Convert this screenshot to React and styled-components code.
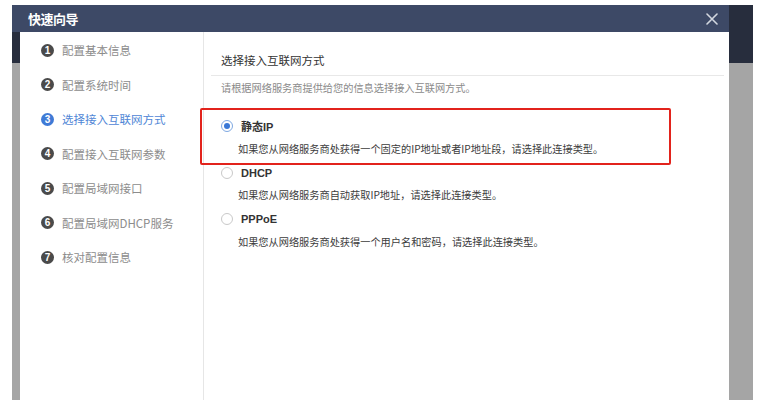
import React from 'react';
import styled, { createGlobalStyle } from 'styled-components';

const GlobalStyle = createGlobalStyle`
    html, body {
        margin: 0;
        padding: 0;
        background: #ffffff;
        overflow: hidden;
    }
    body {
        font-family: "Noto Sans CJK SC", "Noto Sans", sans-serif;
    }
`;

const Page = styled.div`
    width: 758px;
    height: 400px;
    padding: 5px 5px 0 12px;
    box-sizing: border-box;
`;

// the app behind the dialog, dimmed by the overlay
const Backdrop = styled.div`
    width: 741px;
    height: 395px;
    background: linear-gradient(#272d3d 0 58px, #a5a5a5 58px);
`;

const Dialog = styled.div`
    width: 717px;
    height: 100%;
    display: flex;
    flex-direction: column;
`;

const Header = styled.div`
    height: 27px;
    flex: none;
    padding: 0 10px 0 16px;
    display: flex;
    align-items: center;
    justify-content: space-between;
    background: #3d4966;
`;

const Title = styled.div`
    color: #ffffff;
    font-size: 13px;
    font-weight: 700;
    letter-spacing: -0.5px;
`;

const Close = styled.button`
    width: 14px;
    height: 14px;
    padding: 0;
    border: 0;
    background: none;
    display: flex;
    align-items: center;
    justify-content: center;
    cursor: pointer;
`;

const Body = styled.div`
    flex: 1;
    margin-left: 8px;
    background: #ffffff;
    display: flex;
`;

const Sidebar = styled.ul`
    width: 184px;
    margin: 0;
    padding: 1px 0 0 21px;
    box-sizing: border-box;
    list-style: none;
    border-right: 1px solid #e6e6e6;
`;

const Step = styled.li`
    height: 34.5px;
    display: flex;
    align-items: center;
    gap: 8px;
    font-size: 11.5px;
    color: ${({ $active }) => ($active ? '#4f86d6' : '#8c8c8c')};
`;

const StepNum = styled.span`
    width: 13px;
    height: 13px;
    border-radius: 50%;
    flex: none;
    display: flex;
    align-items: center;
    justify-content: center;
    background: ${({ $active }) => ($active ? '#3f7ad6' : '#4a4a4a')};
    color: #ffffff;
    font-family: "Liberation Sans", Arial, sans-serif;
    font-size: 10px;
    font-weight: 700;
`;

const Content = styled.div`
    flex: 1;
    position: relative;
    padding: 0 5px 0 7px;
`;

const Heading = styled.div`
    height: 44px;
    box-sizing: border-box;
    padding: 0 0 8px 10px;
    display: flex;
    align-items: flex-end;
    border-bottom: 1px solid #e8e8e8;
    font-size: 11.5px;
    line-height: 14px;
    color: #333333;
`;

const Hint = styled.div`
    margin-top: 5px;
    padding-left: 10px;
    font-size: 10.2px;
    line-height: 14px;
    color: #8a8a8a;
`;

const Options = styled.div`
    margin-top: 20px;
    padding-left: 10px;
`;

const Option = styled.div`
    margin-bottom: 2.5px;
`;

const OptionLabel = styled.label`
    height: 22px;
    display: flex;
    align-items: center;
    gap: 8px;
    font-family: "Liberation Sans", "Noto Sans CJK SC", sans-serif;
    font-size: 11px;
    font-weight: 700;
    color: #333333;
`;

const Radio = styled.span`
    width: 12px;
    height: 12px;
    box-sizing: border-box;
    border-radius: 50%;
    border: 1px solid ${({ $checked }) => ($checked ? '#7ea8e2' : '#c9c9c9')};
    display: flex;
    align-items: center;
    justify-content: center;

    &::after {
        content: '';
        width: 6px;
        height: 6px;
        border-radius: 50%;
        background: ${({ $checked }) => ($checked ? '#3a78d6' : 'transparent')};
    }
`;

const OptionDesc = styled.div`
    height: 22px;
    display: flex;
    align-items: center;
    padding-left: 17px;
    font-size: 10.2px;
    color: #3c3c3c;
`;

// red annotation drawn over the screenshot
const Highlight = styled.div`
    position: absolute;
    left: -4px;
    top: 76px;
    width: 471px;
    height: 57px;
    box-sizing: border-box;
    border: 2px solid #e2231c;
    border-radius: 2px;
    pointer-events: none;
`;

const steps = [
    '配置基本信息',
    '配置系统时间',
    '选择接入互联网方式',
    '配置接入互联网参数',
    '配置局域网接口',
    '配置局域网DHCP服务',
    '核对配置信息',
];

const options = [
    { name: '静态IP', desc: '如果您从网络服务商处获得一个固定的IP地址或者IP地址段，请选择此连接类型。', checked: true },
    { name: 'DHCP', desc: '如果您从网络服务商自动获取IP地址，请选择此连接类型。' },
    { name: 'PPPoE', desc: '如果您从网络服务商处获得一个用户名和密码，请选择此连接类型。' },
];

export default function App() {
    return (
        <Page>
            <GlobalStyle />
            <Backdrop>
                <Dialog>
                    <Header>
                        <Title>快速向导</Title>
                        <Close aria-label="关闭">
                            <svg width="12" height="12" viewBox="0 0 12 12">
                                <path d="M1 1 L11 11 M11 1 L1 11" stroke="#d3d7df" strokeWidth="1.6" strokeLinecap="round" />
                            </svg>
                        </Close>
                    </Header>
                    <Body>
                        <Sidebar>
                            {steps.map((s, i) => (
                                <Step key={s} $active={i === 2}>
                                    <StepNum $active={i === 2}>{i + 1}</StepNum>
                                    {s}
                                </Step>
                            ))}
                        </Sidebar>
                        <Content>
                            <Heading>选择接入互联网方式</Heading>
                            <Hint>请根据网络服务商提供给您的信息选择接入互联网方式。</Hint>
                            <Options>
                                {options.map((o) => (
                                    <Option key={o.name}>
                                        <OptionLabel>
                                            <Radio $checked={o.checked} />
                                            {o.name}
                                        </OptionLabel>
                                        <OptionDesc>{o.desc}</OptionDesc>
                                    </Option>
                                ))}
                            </Options>
                            <Highlight />
                        </Content>
                    </Body>
                </Dialog>
            </Backdrop>
        </Page>
    );
}
